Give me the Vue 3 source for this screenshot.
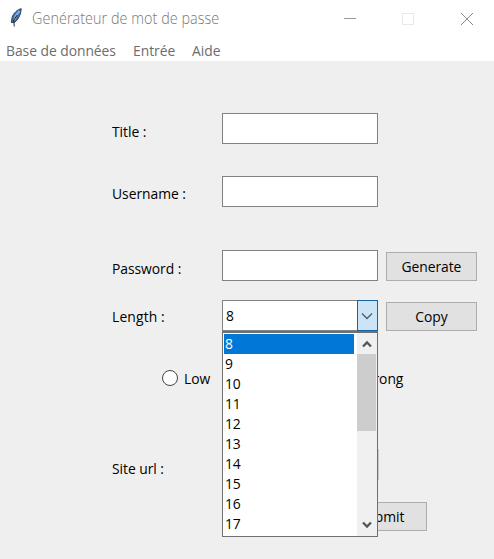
<script setup>
import { ref } from 'vue'

const menus = [
  { text: 'Base de données', id: 'base' },
  { text: 'Entrée', id: 'entry' },
  { text: 'Aide', id: 'help' },
]
const lengths = [8, 9, 10, 11, 12, 13, 14, 15, 16, 17]
const length = ref(8)
</script>

<template>
  <div class="window">
    <header class="titlebar">
      <svg class="feather" width="16" height="20" viewBox="0 0 16 20">
        <path d="M14.200 .7C11 1.200 6.300 5 5.100 9.500L4.300 14.500L7.600 14.400C11.500 11.500 14 6 14.200 .7Z" fill="#3d6fae" stroke="#40444c" stroke-width="1" />
        <path d="M12.500 3C10 5.500 8.300 8 7.200 12" stroke="#83b4e8" stroke-width="2" fill="none" />
        <path d="M10.300 7L6.700 12L7.300 18.500" stroke="#262a30" stroke-width="1" fill="none" />
      </svg>
      <span class="caption"><span class="t t-caption">Genérateur de mot de passe</span></span>
      <svg class="controls" width="130" height="14" viewBox="0 0 130 14" fill="none" shape-rendering="crispEdges">
        <path d="M0 6.500H12" stroke="#999" />
        <path d="M58.500 1.500H69.500V12.500H58.500Z" stroke="#e9e9e9" />
        <path d="M117 1L129 13M129 1L117 13" stroke="#8c8c8c" shape-rendering="auto" />
      </svg>
    </header>
    <nav class="menubar">
      <span v-for="m in menus" :key="m.id" :class="['menu', m.id]"><span class="t">{{ m.text }}</span></span>
    </nav>

    <main class="form">
      <div class="row title">
        <label class="label"><span class="t">Title :</span></label>
        <div class="field"></div>
      </div>
      <div class="row user">
        <label class="label"><span class="t">Username :</span></label>
        <div class="field"></div>
      </div>
      <div class="row pass">
        <label class="label"><span class="t">Password :</span></label>
        <div class="field"></div>
        <div class="button"><span class="t">Generate</span></div>
      </div>
      <div class="row len">
        <label class="label"><span class="t">Length :</span></label>
        <div class="field combo">
          <span class="value"><span class="t">{{ length }}</span></span>
          <div class="arrow">
            <svg width="12" height="8" viewBox="0 0 12 8"><path d="M1 1.500L6 6.500L11 1.500" fill="none" stroke="#555d65" stroke-width="1.400" /></svg>
          </div>
          <div class="popup">
            <ul class="list">
              <li v-for="n in lengths" :key="n" :class="{ selected: n === length }"><span class="t">{{ n }}</span></li>
            </ul>
            <div class="scrollbar">
              <svg width="10" height="8" viewBox="0 0 10 8"><path d="M1 6.500L5 2.500L9 6.500" fill="none" stroke="#555" stroke-width="2.300" /></svg>
              <div class="thumb"></div>
              <svg class="down" width="10" height="8" viewBox="0 0 10 8"><path d="M1 1.500L5 5.500L9 1.500" fill="none" stroke="#555" stroke-width="2.300" /></svg>
            </div>
          </div>
        </div>
        <div class="button"><span class="t">Copy</span></div>
      </div>
      <div class="radios">
        <span class="radio"><i class="dot"></i><span class="t">Low</span></span>
        <span class="radio strong"><i class="dot"></i><span class="t">Strong</span></span>
      </div>
      <div class="row site">
        <label class="label"><span class="t">Site url :</span></label>
        <div class="field faint"></div>
      </div>
      <div class="actions">
        <div class="button"><span class="t">Submit</span></div>
      </div>
    </main>
  </div>
</template>

<style>
body {
  margin: 0;
  background: #efefef;
}
</style>

<style scoped>
.window {
  width: 494px;
  height: 559px;
  overflow: hidden;
  background: #efefef;
  color: #000;
  font: 15px/20px "Open Sans", "Noto Sans", sans-serif;
  letter-spacing: -0.05px;
  white-space: nowrap;
}
.t {
  display: inline-block;
  transform: scaleX(0.925);
  transform-origin: left center;
}
.button .t {
  transform-origin: center;
}
.titlebar {
  display: flex;
  height: 38px;
  box-sizing: border-box;
  padding: 8px 0 0 7px;
  background: #fff;
}
.caption {
  width: 312px;
  margin-left: 9px;
  color: #777;
  font-size: 15.5px;
  font-weight: 300;
  letter-spacing: 0.05px;
}
.t-caption {
  transform: scaleX(0.928);
}
.controls {
  margin-top: 4px;
}
.menubar {
  display: flex;
  height: 23px;
  line-height: 24px;
  padding-left: 6px;
  background: #fff;
  color: #6d6d6d;
}
.base { width: 127px; }
.entry { width: 59px; }
.form {
  padding: 52px 0 0 112px;
}
.row {
  display: flex;
  height: 31px;
  align-items: center;
}
.label {
  width: 110px;
  padding-top: 4px;
}
.user .label {
  padding-top: 3px;
}
.len .label {
  padding-top: 0;
  letter-spacing: 0.15px;
}
.field {
  width: 156px;
  height: 31px;
  box-sizing: border-box;
  border: 1px solid #828282;
  background: #fff;
}
.row .faint {
  width: 157px;
  border-color: #c8c8c8;
}
.user { margin-top: 32px; }
.pass { margin-top: 43px; }
.len { margin-top: 19px; }
.site { margin-top: 61px; }
.site .label { padding-top: 6px; }
.button {
  width: 91px;
  height: 29px;
  box-sizing: border-box;
  margin-left: 8px;
  border: 1px solid #adadad;
  background: #e1e1e1;
  text-align: center;
  line-height: 26px;
}
.row .button {
  margin-top: 1px;
}
.combo {
  position: relative;
  display: flex;
  justify-content: space-between;
}
.value {
  padding-left: 3px;
  line-height: 29px;
}
.arrow {
  display: flex;
  width: 21px;
  height: 31px;
  box-sizing: border-box;
  margin: -1px -1px 0 0;
  border: 1px solid #1264ab;
  background: #cce4f7;
  align-items: center;
  justify-content: center;
}
.arrow svg {
  margin-right: 1px;
}
.popup {
  position: absolute;
  z-index: 2;
  top: 30px;
  left: -1px;
  display: flex;
  width: 156px;
  height: 206px;
  box-sizing: border-box;
  border: 1px solid #707070;
  border-top-width: 2px;
  background: #fff;
  justify-content: space-between;
}
.list {
  width: 130px;
  margin: 1px 0 0 1px;
  padding: 0;
  list-style: none;
}
.list li {
  height: 20px;
  padding-left: 0.5px;
  line-height: 19px;
  letter-spacing: -0.3px;
}
.list .selected {
  background: #0078d7;
  color: #fff;
}
.scrollbar {
  display: flex;
  width: 20px;
  flex-direction: column;
  align-items: center;
  padding: 7px 0;
  box-sizing: border-box;
  background: #f0f0f0;
}
.scrollbar svg {
  margin-right: 1px;
}
.thumb {
  width: 19px;
  height: 77px;
  margin: 6px 1px 0 0;
  background: #cdcdcd;
}
.down {
  margin-top: auto;
}
.radios {
  display: flex;
  height: 20px;
  margin-top: 37px;
  padding-left: 50px;
}
.radio {
  display: flex;
  width: 168px;
  align-items: center;
}
.strong {
  margin-left: 22px;
}
.dot {
  width: 16px;
  height: 16px;
  box-sizing: border-box;
  margin-right: 6px;
  border: 1px solid #444;
  border-radius: 50%;
  background: #fff;
}
.actions {
  display: flex;
  margin-top: 22px;
  padding-left: 216px;
}
</style>
